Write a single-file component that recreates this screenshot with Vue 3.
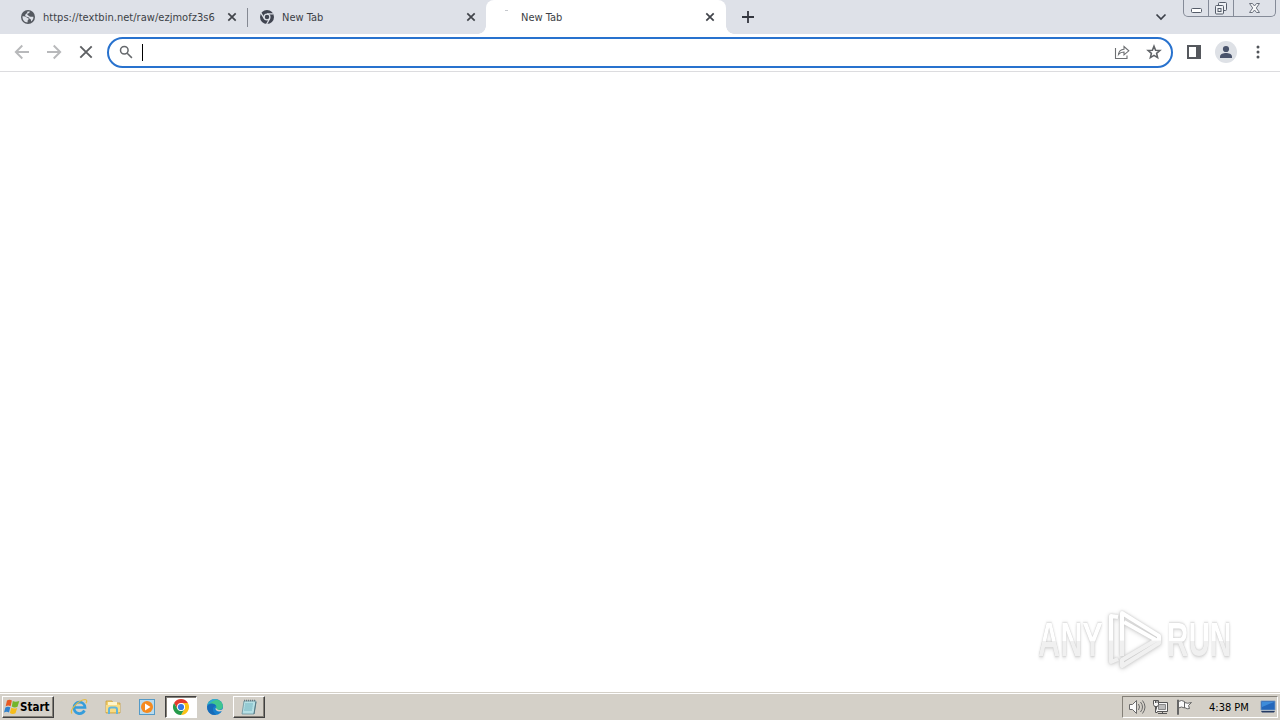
<!-- App.vue -->
<template>
  <div class="desktop">
    <header class="tab-strip">
      <div class="tabs">
        <div v-for="(tab, i) in tabs" :key="i" class="tab" :class="[tab.icon, { active: tab.active }]">
          <svg v-if="tab.icon === 'globe'" class="favicon" viewBox="0 0 16 16">
            <circle cx="8" cy="8" r="7" fill="#555960" />
            <path d="M2.500 7.200c1.500-.2 3 .2 4 1.100.8.700 1.900.5 2.200 1.500.2.800-.9 1-1 1.800l-.2 1.900C4.500 13.300 2.300 10.700 2.500 7.200ZM7.500 2.400l2.300.2c-.2 1.200-.8 1.900-2 2-.9.200-.5 1.300.2 1.600 1 .5 1.500 1.400 2.600 1.500h2.800c.3 2-1 3.900-2.400 4.700.2-1.500-.2-2.400-1.500-2.600l-.6-1.400-2.500-.6c-1.200-.3-1.500-1.300-1-2.200.5-1 2.100-1.400 2.100-3.200Z" fill="#dee1e8" />
          </svg>
          <svg v-else-if="tab.icon === 'chrome'" class="favicon" viewBox="0 0 16 16">
            <circle cx="8" cy="8" r="7" fill="#414551" />
            <circle cx="8" cy="8" r="2.900" fill="none" stroke="#dee1e8" stroke-width="1.300" />
            <path d="M8 4.900h6.400M5.300 9.500 2 4.200M10.700 9.500l-3.100 5.700" stroke="#dee1e8" stroke-width="1.300" />
          </svg>
          <span v-else class="favicon loading"></span>
          <span class="tab-title">{{ tab.title }}</span>
          <svg class="tab-close" viewBox="0 0 10 10">
            <path d="m1.300 1.300 7.400 7.400m0-7.400L1.300 8.700" stroke="#41444a" stroke-width="1.700" />
          </svg>
        </div>
      </div>
      <svg class="new-tab" viewBox="0 0 12 12">
        <path d="M6 0v12M0 6h12" stroke="#33363e" stroke-width="1.800" />
      </svg>
      <svg class="tab-search" viewBox="0 0 12 8">
        <path d="m1.500 1.500 4.500 4.500 4.500-4.500" fill="none" stroke="#3c4049" stroke-width="1.700" />
      </svg>
      <div class="window-controls">
        <div class="control min">
          <svg width="13" height="16"><rect x="1.500" y="8.500" width="10" height="4" rx="1" fill="#fff" stroke="#555c69" /></svg>
        </div>
        <div class="control max">
          <svg width="15" height="16" fill="#eef0f4" stroke="#555c69">
            <rect x="4.500" y="2.500" width="8" height="8" rx="1" />
            <rect x="1.500" y="5.500" width="8" height="8.500" rx="1" />
            <rect x="4" y="8.500" width="3" height="3" />
          </svg>
        </div>
        <div class="control close">
          <svg width="13" height="16">
            <path d="M1.500 3.500h3l2 2.500 2-2.500h3L8.300 8l3.200 4.500h-3l-2-2.500-2 2.500h-3L4.700 8Z" fill="#f6f7f9" stroke="#6c727e" />
          </svg>
        </div>
      </div>
    </header>

    <div class="toolbar">
      <svg class="nav back" viewBox="0 0 16 16"><path d="M15 8H2M8.300 1.500 1.800 8l6.500 6.500" /></svg>
      <svg class="nav forward" viewBox="0 0 16 16"><path d="M1 8h13M7.700 1.500 14.200 8l-6.500 6.500" /></svg>
      <svg class="nav stop" viewBox="0 0 16 16"><path d="m2.300 2.300 11.400 11.400m0-11.400L2.300 13.700" /></svg>
      <div class="omnibox">
        <svg class="magnifier" viewBox="0 0 14 14">
          <circle cx="5.300" cy="5.300" r="3.800" />
          <path d="m8.200 8.200 4.700 4.700" />
        </svg>
        <span class="caret"></span>
        <svg class="share" viewBox="0 0 16 16">
          <path d="M1.500 4v10.500h11.500V11.500M4.500 10.500C5 7 7 5.500 10 5.300V2.500l4.800 4.300-4.800 4V8c-2.500 0-4.200.8-5.500 2.500Z" />
        </svg>
        <svg class="star" viewBox="0 0 16 16">
          <path d="m8 2.200 1.600 4 4.300.3-3.300 2.900 1 4.200L8 11.400l-3.600 2.200 1-4.200-3.300-2.900 4.300-.3Z" />
        </svg>
      </div>
      <svg class="side-panel" viewBox="0 0 14 14">
        <path d="M1 1h12v12H1Z" fill="none" stroke="#55585d" stroke-width="2" />
        <path d="M9 1h4v12H9Z" fill="#55585d" />
      </svg>
      <svg class="avatar" viewBox="0 0 22 22">
        <circle cx="11" cy="11" r="11" fill="#dee1e6" />
        <circle cx="11" cy="8" r="3.100" fill="#49536b" />
        <path d="M5 17v-1.500c0-2.400 3.500-3.500 6-3.500s6 1.100 6 3.500V17Z" fill="#49536b" />
      </svg>
      <svg class="menu" viewBox="0 0 4 14" fill="#515459">
        <circle cx="2" cy="2" r="1.500" /><circle cx="2" cy="7" r="1.500" /><circle cx="2" cy="12" r="1.500" />
      </svg>
    </div>

    <main class="page">
      <div class="watermark">
        <span class="word any">ANY</span>
        <svg class="play" viewBox="0 0 58 64">
          <defs>
            <linearGradient id="shine" gradientUnits="userSpaceOnUse" x1="0" y1="0" x2="0" y2="64">
              <stop offset=".5" stop-color="#fff" />
              <stop offset=".52" stop-color="#f0f0f0" />
            </linearGradient>
          </defs>
          <g fill="none" stroke="url(#shine)" stroke-width="4" stroke-linejoin="round">
            <path d="M13 9 6 8v46l7-3" />
            <path d="M17 48V5l37 23v7L17 58v-6l34-20-32-18" />
          </g>
        </svg>
        <span class="word run">RUN</span>
      </div>
    </main>

    <footer class="taskbar">
      <div class="start">
        <svg viewBox="0 0 16 16">
          <path d="M3 1.600C4.500.5 6.200.5 7.900 1.500L6.600 7.200C5 6.300 3.300 6.300 1.700 7.300Z" fill="#e85a22" />
          <path d="M8.800 2c1.700 1 3.500 1.100 6.500 0l-1.800 5.800c-2 1-3.800.9-5.700-.2Z" fill="#73b52c" />
          <path d="M1.400 8.400c1.700-1 3.300-1 4.900-.1L5 13.500C3.400 12.500 1.700 12.600 0 13.600Z" fill="#3182cd" />
          <path d="M7.300 8.800c1.800 1 3.600 1.100 5.900.1l-1.700 5.300c-2 1-3.800.9-5.600-.2Z" fill="#f6bd1b" />
        </svg>
        <span>Start</span>
      </div>

      <div class="quick-launch">
        <div class="launch">
          <svg viewBox="0 0 18 18">
            <path d="M14.500 12.500c-3 5-10.500 3.600-10.500-3 0-6.700 10.500-7.400 11 0H5" fill="none" stroke="#359ddb" stroke-width="2.700" />
            <path d="M2 15.500C-1 12 9 2 15 1.500c2.300 0 2 2 1 3.700" fill="none" stroke="#e3bc45" stroke-width="1.200" />
          </svg>
        </div>
        <div class="launch">
          <svg viewBox="0 0 18 18">
            <path d="M2 3h6l1 2h7v10H2Z" fill="#f2cf6b" stroke="#c99f3d" stroke-width=".8" />
            <path d="M4 4h9v3H4Z" fill="#fff5ca" />
            <path d="M2 7h14v7H2Z" fill="#f9dc84" />
            <path d="M5 16v-4.500q0-2 2-2h4q2 0 2 2V16" fill="none" stroke="#63b5da" stroke-width="2" />
          </svg>
        </div>
        <div class="launch">
          <svg viewBox="0 0 18 18">
            <rect x="1.500" y="1.500" width="15" height="15" fill="#b9dbee" stroke="#549ac7" />
            <circle cx="9" cy="9" r="6" fill="#f58a1f" />
            <path d="m7 5.500 5.500 3.500L7 12.500Z" fill="#fff" />
          </svg>
        </div>
        <div class="launch pressed">
          <svg viewBox="0 0 18 18">
            <path d="M2.070 5A8 8 0 0 1 15.930 5H9L5.540 11Z" fill="#e33b2e" />
            <path d="M15.930 5A8 8 0 0 1 9 17l3.460-6A4 4 0 0 0 9 5Z" fill="#fbc116" />
            <path d="M2.070 5A8 8 0 0 0 9 17l3.460-6H5.540Z" fill="#269b4b" />
            <circle cx="9" cy="9" r="4" fill="#fff" />
            <circle cx="9" cy="9" r="3.100" fill="#3478e5" />
          </svg>
        </div>
        <div class="launch">
          <svg viewBox="0 0 18 18">
            <circle cx="9" cy="9" r="8" fill="#1780ce" />
            <path d="M1.400 7C3 .500 12-1 16 5c2 4 .5 7-4 7-3 0-2.500-1.500-1.500-3C10 5.500 5 4.500 1.400 7Z" fill="#3fc58f" />
            <path d="M1.400 7C3 2 8 .5 11.500 1.500 8 2 5 4 1.400 7Z" fill="#2fa8dc" />
            <path d="M1.300 8C4 4.800 8.500 5 10 8c-3 0-5 4 0 8.800C4 17.500.5 13 1.300 8Z" fill="#176bb8" />
            <path d="M9.500 10c-.5 3 3.500 4.500 7 2.700l1 .3v-2.500c-2 2-5.500 2-6.500.5Z" fill="#d4d0c8" />
          </svg>
        </div>
        <div class="launch raised">
          <svg viewBox="0 0 18 18">
            <path d="M4 3h12l-2 13H2Z" fill="#b6e0e5" stroke="#688f9b" stroke-width=".8" />
            <path d="M5 6h8M4.700 8h8M4.400 10h8M4 12h8" stroke="#63a9b7" stroke-width=".8" />
            <path d="M4 2.500h12" stroke="#677981" stroke-width="1.500" stroke-dasharray="1 1" />
            <path d="m16 4-2 12" stroke="#547782" />
          </svg>
        </div>
      </div>

      <div class="tray">
        <svg class="volume" viewBox="0 0 18 16" fill="none" stroke="#696969">
          <path d="M1.500 5.500h3l4-4v13l-4-4h-3Z" fill="#fafafa" />
          <path d="M10.500 5q2 3 0 6M12.500 3q4 5 0 10M14.500 1.500q5 6.500 0 13" />
        </svg>
        <svg class="network" viewBox="0 0 17 16" fill="#f7f7f7" stroke="#555">
          <path d="M4.500 3.500h11v9h-11Z" />
          <path d="M6.500 5.500h7v5h-7Z" fill="#bcbcbc" stroke="#888" />
          <path d="M6 14.500h9M10.500 12.500v2M3.500 7.500v6h2" />
          <path d="M1.500 1.500h5v4l-1 2h-3l-1-2ZM3.500 2v2M5 2v2" />
        </svg>
        <svg class="flag" viewBox="0 0 16 16" fill="#fafafa" stroke="#666">
          <path d="M8.500 3.500q3 1.500 7 0l-3 3 1 3q-2 1-5-1ZM2.500 2.500q3-2 6 0v6.500q-3-2-6 0Z" />
          <path d="M1.500 1v14.500h1V1Z" />
        </svg>
        <span class="clock">4:38 PM</span>
        <svg class="show-desktop" viewBox="0 0 16 14">
          <path d="M1 1h14v9H1Z" fill="#2467bb" stroke="#7095c0" stroke-width=".8" />
          <path d="M2 2h12L2 7Z" fill="#3e8cda" />
          <path d="M1 11h14l-1 1.500H2Z" fill="#243a63" />
        </svg>
      </div>
    </footer>
  </div>
</template>

<script setup>
const tabs = [
  { title: 'https://textbin.net/raw/ezjmofz3s6', icon: 'globe' },
  { title: 'New Tab', icon: 'chrome' },
  { title: 'New Tab', icon: 'blank', active: true },
]
</script>

<style>
body {
  margin: 0;
  overflow: hidden;
}
</style>

<style scoped>
.desktop {
  width: 1280px;
  height: 720px;
  display: flex;
  flex-direction: column;
  background: #fff;
  font-family: 'DejaVu Sans Condensed', 'DejaVu Sans', sans-serif;
  font-size: 11px;
}

svg {
  display: block;
  flex-shrink: 0;
}

.tab-strip {
  height: 34px;
  display: flex;
  background: #dee1e8;
}

.tabs {
  display: flex;
  padding-left: 8px;
}

.tab {
  width: 239px;
  height: 34px;
  box-sizing: border-box;
  display: flex;
  align-items: center;
  padding: 0 10px 0 12px;
  position: relative;
  color: #3c3f46;
}

.tab.globe::after {
  content: '';
  position: absolute;
  right: -1px;
  top: 8px;
  width: 1px;
  height: 19px;
  background: #858993;
}

.tab.active {
  width: 240px;
  padding-right: 11px;
  background: #fff;
  border-radius: 8px 8px 0 0;
}

.tab.active::before,
.tab.active::after {
  content: '';
  position: absolute;
  bottom: 0;
  width: 8px;
  height: 8px;
}

.tab.active::before {
  left: -8px;
  background: radial-gradient(circle at 0 0, transparent 7.5px, #fff 8px);
}

.tab.active::after {
  right: -8px;
  background: radial-gradient(circle at 100% 0, transparent 7.5px, #fff 8px);
}

.favicon {
  width: 16px;
  height: 16px;
  margin-right: 7px;
  flex-shrink: 0;
}

.loading {
  position: relative;
}

.loading::before {
  content: '';
  position: absolute;
  left: 7px;
  top: 1px;
  width: 3px;
  height: 1px;
  background: #c5c8cd;
}

.tab-title {
  flex: 1;
  white-space: nowrap;
}

.globe .tab-title {
  letter-spacing: 0.03px;
}

.tab-close {
  width: 10px;
  height: 10px;
}

.new-tab {
  width: 12px;
  height: 12px;
  margin: 11px 0 0 16px;
}

.tab-search {
  width: 12px;
  height: 8px;
  margin: 13px 16px 0 auto;
}

.window-controls {
  display: flex;
  height: 17px;
  box-sizing: border-box;
  width: 93px;
  margin-right: 4px;
  border: 1px solid #858b98;
  border-top: 0;
  border-radius: 0 0 5px 5px;
}

.control {
  width: 24px;
  display: flex;
  justify-content: center;
  border-right: 1px solid #858b98;
}

.control.close {
  flex: 1;
  border: 0;
}

.toolbar {
  height: 38px;
  box-sizing: border-box;
  border-bottom: 1px solid #dcdcdf;
  display: flex;
  align-items: center;
  padding: 0 20px 1px 14px;
}

.nav {
  width: 16px;
  height: 16px;
  margin-right: 16px;
  fill: none;
  stroke: #b8b9bb;
  stroke-width: 1.9;
}

.stop {
  margin-right: 13px;
  stroke: #5e6063;
}

.omnibox {
  width: 1066px;
  height: 31px;
  box-sizing: border-box;
  border: 2px solid #2872ce;
  border-radius: 16px;
  display: flex;
  align-items: center;
  padding: 0 9px 0 10px;
}

.magnifier {
  width: 14px;
  height: 14px;
  fill: none;
  stroke: #65686c;
  stroke-width: 1.5;
}

.caret {
  width: 1px;
  height: 17px;
  margin-left: 9px;
  background: #000;
}

.share {
  width: 16px;
  height: 16px;
  margin-left: auto;
  margin-right: 16px;
  fill: none;
  stroke: #6d6f72;
  stroke-width: 1.1;
}

.star {
  width: 16px;
  height: 16px;
  fill: none;
  stroke: #606367;
  stroke-width: 1.6;
}

.side-panel {
  width: 14px;
  height: 14px;
  margin-left: 14px;
}

.avatar {
  width: 22px;
  height: 22px;
  margin-left: 14px;
}

.menu {
  width: 4px;
  height: 14px;
  margin-left: 19px;
}

.page {
  flex: 1;
  display: flex;
  align-items: flex-end;
  justify-content: flex-end;
}

.watermark {
  display: flex;
  align-items: center;
  width: 196px;
  height: 64px;
  margin: 0 46px 20px 0;
}

.word {
  font: bold 48px/48px 'Liberation Sans', sans-serif;
  color: transparent;
  background: linear-gradient(#fff 52%, #f0f0f0 53%);
  background-clip: text;
  filter: drop-shadow(0 0 1px #c4c4c4) drop-shadow(0 1px 2px #d6d6d6);
  transform-origin: left center;
  transform: scaleX(0.64);
  flex-shrink: 0;
  width: 104px;
}

.any {
  margin-right: -37px;
}

.play {
  width: 58px;
  height: 64px;
  filter: drop-shadow(0 0 1px #c8c8c8) drop-shadow(0 1px 2px #d8d8d8);
}

.run {
  margin-left: 4px;
  transform: scaleX(0.62);
}

.taskbar {
  height: 28px;
  box-sizing: border-box;
  border-top: 1px solid #d4d0c8;
  box-shadow: inset 0 1px #fff;
  background: #d4d0c8;
  display: flex;
  align-items: flex-end;
  padding: 0 2px 2px;
}

.start {
  width: 52px;
  height: 22px;
  box-sizing: border-box;
  border: 1px solid;
  border-color: #fff #404040 #404040 #fff;
  box-shadow: inset -1px -1px #848078;
  display: flex;
  align-items: center;
  padding-left: 1px;
  font-size: 11.5px;
  font-weight: bold;
  color: #000;
}

.start svg {
  width: 16px;
  height: 16px;
}

.quick-launch {
  display: flex;
  margin-left: 9px;
}

.launch {
  width: 32px;
  height: 22px;
  box-sizing: border-box;
  margin-right: 2px;
  display: flex;
  align-items: center;
  justify-content: center;
}

.launch svg {
  width: 18px;
  height: 18px;
}

.pressed {
  background: #fff;
  border: 1px solid;
  border-color: #404040 #fff #fff #404040;
  box-shadow: inset 1px 1px #848078;
}

.raised {
  border: 1px solid;
  border-color: #fff #404040 #404040 #fff;
  box-shadow: inset -1px -1px #848078;
}

.tray {
  width: 156px;
  height: 22px;
  box-sizing: border-box;
  margin-left: auto;
  border: 1px solid;
  border-color: #848078 #fff #fff #848078;
  display: flex;
  align-items: center;
  padding-left: 5px;
}

.volume {
  width: 18px;
  height: 16px;
  margin-right: 6px;
}

.network {
  width: 17px;
  height: 16px;
  margin-right: 7px;
}

.flag {
  width: 16px;
  height: 16px;
}

.clock {
  width: 40px;
  margin-left: 17px;
  white-space: nowrap;
  color: #000;
}

.show-desktop {
  width: 16px;
  height: 14px;
  margin-left: 11px;
}
</style>
